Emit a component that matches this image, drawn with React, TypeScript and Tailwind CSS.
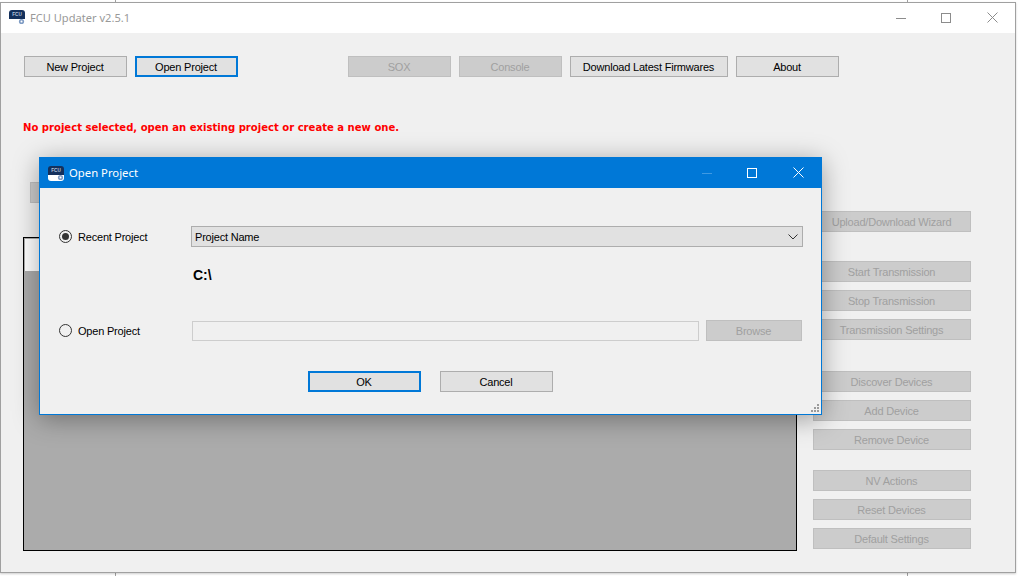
import React from 'react';

const font = "font-['Liberation_Sans',Arial,sans-serif]";

const AppIcon: React.FC<{ className?: string }> = ({ className }) => (
  <svg viewBox="0 0 16 15" className={className}>
    <path d="M3 0h10a3 3 0 0 1 3 3v6h-16v-6a3 3 0 0 1 3-3z" fill="#14305c" />
    <path d="M0 9h16v3a3 3 0 0 1-3 3h-10a3 3 0 0 1-3-3z" fill="#ffffff" />
    <text x="8" y="6" textAnchor="middle" fontSize="4.6" fontWeight="700" fill="#b9c7dc" fontFamily="Liberation Sans, sans-serif">FCU</text>
    <circle cx="12.5" cy="11.5" r="2.6" fill="#7f9cc4" />
    <circle cx="12.5" cy="11.5" r="1" fill="#ffffff" />
  </svg>
);

const WinControls: React.FC<{ color: string; minColor: string }> = ({ color, minColor }) => (
  <div className="flex items-center">
    <svg width="10" height="10" viewBox="0 0 10 10" className="mr-[35px]">
      <path d="M0 5.5h10" stroke={minColor} strokeWidth="1" />
    </svg>
    <svg width="10" height="10" viewBox="0 0 10 10" className="mr-[36px]">
      <rect x="0.5" y="0.5" width="9" height="9" fill="none" stroke={color} strokeWidth="1" />
    </svg>
    <svg width="11" height="11" viewBox="0 0 11 11">
      <path d="M0.5 0.5l10 10M10.5 0.5l-10 10" fill="none" stroke={color} strokeWidth="1" />
    </svg>
  </div>
);

const Btn: React.FC<{ label: string; w: string; disabled?: boolean; focused?: boolean }> = ({ label, w, disabled, focused }) => (
  <div
    className={`flex h-[21px] shrink-0 items-center justify-center pr-[1px] pt-[1px] text-[11px] tracking-[-0.2px] ${w} ${
      disabled
        ? 'border border-[#bfbfbf] bg-[#cccccc] text-[#a0a0a0]'
        : focused
          ? 'border-2 border-[#0078d7] bg-[#e1e1e1] text-black'
          : 'border border-[#adadad] bg-[#e1e1e1] text-black'
    }`}
  >
    {label}
  </div>
);

const Radio: React.FC<{ checked?: boolean }> = ({ checked }) => (
  <div className="flex h-[13px] w-[13px] items-center justify-center rounded-full border border-[#333333] bg-[#f0f0f0]">
    {checked && <div className="h-[7px] w-[7px] rounded-full bg-[#333333]" />}
  </div>
);

const Grip = () => (
  <svg width="10" height="10" viewBox="0 0 10 10" className="absolute bottom-[1px] right-[1px]">
    <g fill="#9a9a9a">
      <rect x="7" y="1" width="2" height="2" />
      <rect x="4" y="4" width="2" height="2" />
      <rect x="7" y="4" width="2" height="2" />
      <rect x="1" y="7" width="2" height="2" />
      <rect x="4" y="7" width="2" height="2" />
      <rect x="7" y="7" width="2" height="2" />
    </g>
  </svg>
);

const OpenProjectDialog = () => (
  <div className="absolute left-[38px] top-[154px] z-10 flex h-[258px] w-[783px] flex-col border border-[#0078d7] bg-[#f0f0f0] shadow-[0_4px_24px_rgba(0,0,0,0.35)]">
    <div className="flex h-[30px] shrink-0 items-center bg-[#0078d7] pl-[8px] pr-[17px]">
      <AppIcon className="h-[15px] w-[16px]" />
      <span className="ml-[5px] font-['Noto_Sans',sans-serif] text-[11.3px] text-white">Open Project</span>
      <div className="ml-auto -mt-[1px]">
        <WinControls color="#ffffff" minColor="#3f9ae3" />
      </div>
    </div>

    <div className="flex flex-1 flex-col pl-[19px] pr-[18px]">
      <div className="mt-[38px] flex h-[21px] items-center">
        <Radio checked />
        <span className="ml-[6px] w-[113px] pt-[1px] text-[11px] tracking-[-0.2px] text-black">Recent Project</span>
        <div className="flex h-[21px] flex-1 items-center justify-between border border-[#adadad] bg-[#e1e1e1] pl-[3px] pr-[4px] text-[11px] tracking-[-0.2px] text-black">
          <span className="pt-[1px]">Project Name</span>
          <svg width="10" height="6" viewBox="0 0 10 6">
            <path d="M0.5 0.5l4.5 4.5 4.5-4.5" fill="none" stroke="#333333" strokeWidth="1" />
          </svg>
        </div>
      </div>
      <div className="mt-[21px] pl-[134px] text-[14px] font-bold leading-[15px] text-black">C:\</div>
      <div className="mt-[37px] flex h-[21px] items-center">
        <Radio />
        <span className="ml-[6px] w-[114px] pt-[1px] text-[11px] tracking-[-0.2px] text-black">Open Project</span>
        <div className="h-[20px] w-[507px] border border-[#cdcdcd] bg-[#f0f0f0]" />
        <div className="ml-[7px] w-[96px]">
          <Btn label="Browse" w="w-[96px]" disabled />
        </div>
      </div>
      <div className="mt-[30px] flex justify-center gap-[19px] pr-[1px]">
        <Btn label="OK" w="w-[113px]" focused />
        <Btn label="Cancel" w="w-[113px]" />
      </div>
    </div>
    <Grip />
  </div>
);

const RightButtons: React.FC<{ labels: string[] }> = ({ labels }) => (
  <div className="flex flex-col gap-[8px]">
    {labels.map((l) => (
      <Btn key={l} label={l} w="w-[158px]" disabled />
    ))}
  </div>
);

export default function App() {
  return (
    <div className={`relative h-[576px] w-[1019px] overflow-hidden bg-white ${font}`}>
      {/* windows behind, only their edges show */}
      <div className="absolute left-[115px] top-0 h-full w-px bg-[#a0a0a0]" />
      <div className="absolute left-[907px] top-0 h-full w-px bg-[#a0a0a0]" />

      <div className="relative ml-0 mt-[2px] flex h-[571px] w-[1016px] flex-col border border-[#a0a0a0] bg-[#f0f0f0] shadow-[0_1px_2px_rgba(0,0,0,0.2)]">
        <div className="flex h-[30px] shrink-0 items-center bg-white pl-[8px] pr-[17px]">
          <AppIcon className="-mt-[1px] h-[15px] w-[16px]" />
          <span className="ml-[5px] font-['Noto_Sans',sans-serif] text-[11.1px] text-[#999999]">FCU Updater v2.5.1</span>
          <div className="ml-auto -mt-[1px]">
            <WinControls color="#8c8c8c" minColor="#8c8c8c" />
          </div>
        </div>

        <div className="flex pl-[23px] pt-[23px]">
          <div className="flex gap-[8px]">
            <Btn label="New Project" w="w-[103px]" />
            <Btn label="Open Project" w="w-[103px]" focused />
          </div>
          <div className="ml-[110px] flex gap-[8px]">
            <Btn label="SOX" w="w-[103px]" disabled />
            <Btn label="Console" w="w-[103px]" disabled />
            <Btn label="Download Latest Firmwares" w="w-[158px]" />
            <Btn label="About" w="w-[103px]" />
          </div>
        </div>

        <div className="mt-[44px] pl-[22px] font-['DejaVu_Sans',sans-serif] text-[10.07px] font-bold leading-[14px] text-[#ff0000]">
          No project selected, open an existing project or create a new one.
        </div>

        <div className="flex flex-1 pl-[22px]">
          <div className="flex w-[774px] flex-col">
            <div className="mt-[47px] ml-[7px] h-[21px] w-[60px] border border-[#bfbfbf] bg-[#cccccc]" />
            <div className="mt-[34px] h-[314px] border border-black bg-[#ababab] pt-px pl-px">
              <div className="h-[32px] w-[100px] bg-white" />
            </div>
          </div>
          <div className="ml-[16px] flex flex-col">
            <div className="mt-[76px]">
              <RightButtons labels={['Upload/Download Wizard']} />
            </div>
            <div className="mt-[29px]">
              <RightButtons labels={['Start Transmission', 'Stop Transmission', 'Transmission Settings']} />
            </div>
            <div className="mt-[31px]">
              <RightButtons labels={['Discover Devices', 'Add Device', 'Remove Device']} />
            </div>
            <div className="mt-[20px]">
              <RightButtons labels={['NV Actions', 'Reset Devices', 'Default Settings']} />
            </div>
          </div>
        </div>

        <OpenProjectDialog />
      </div>
    </div>
  );
}
